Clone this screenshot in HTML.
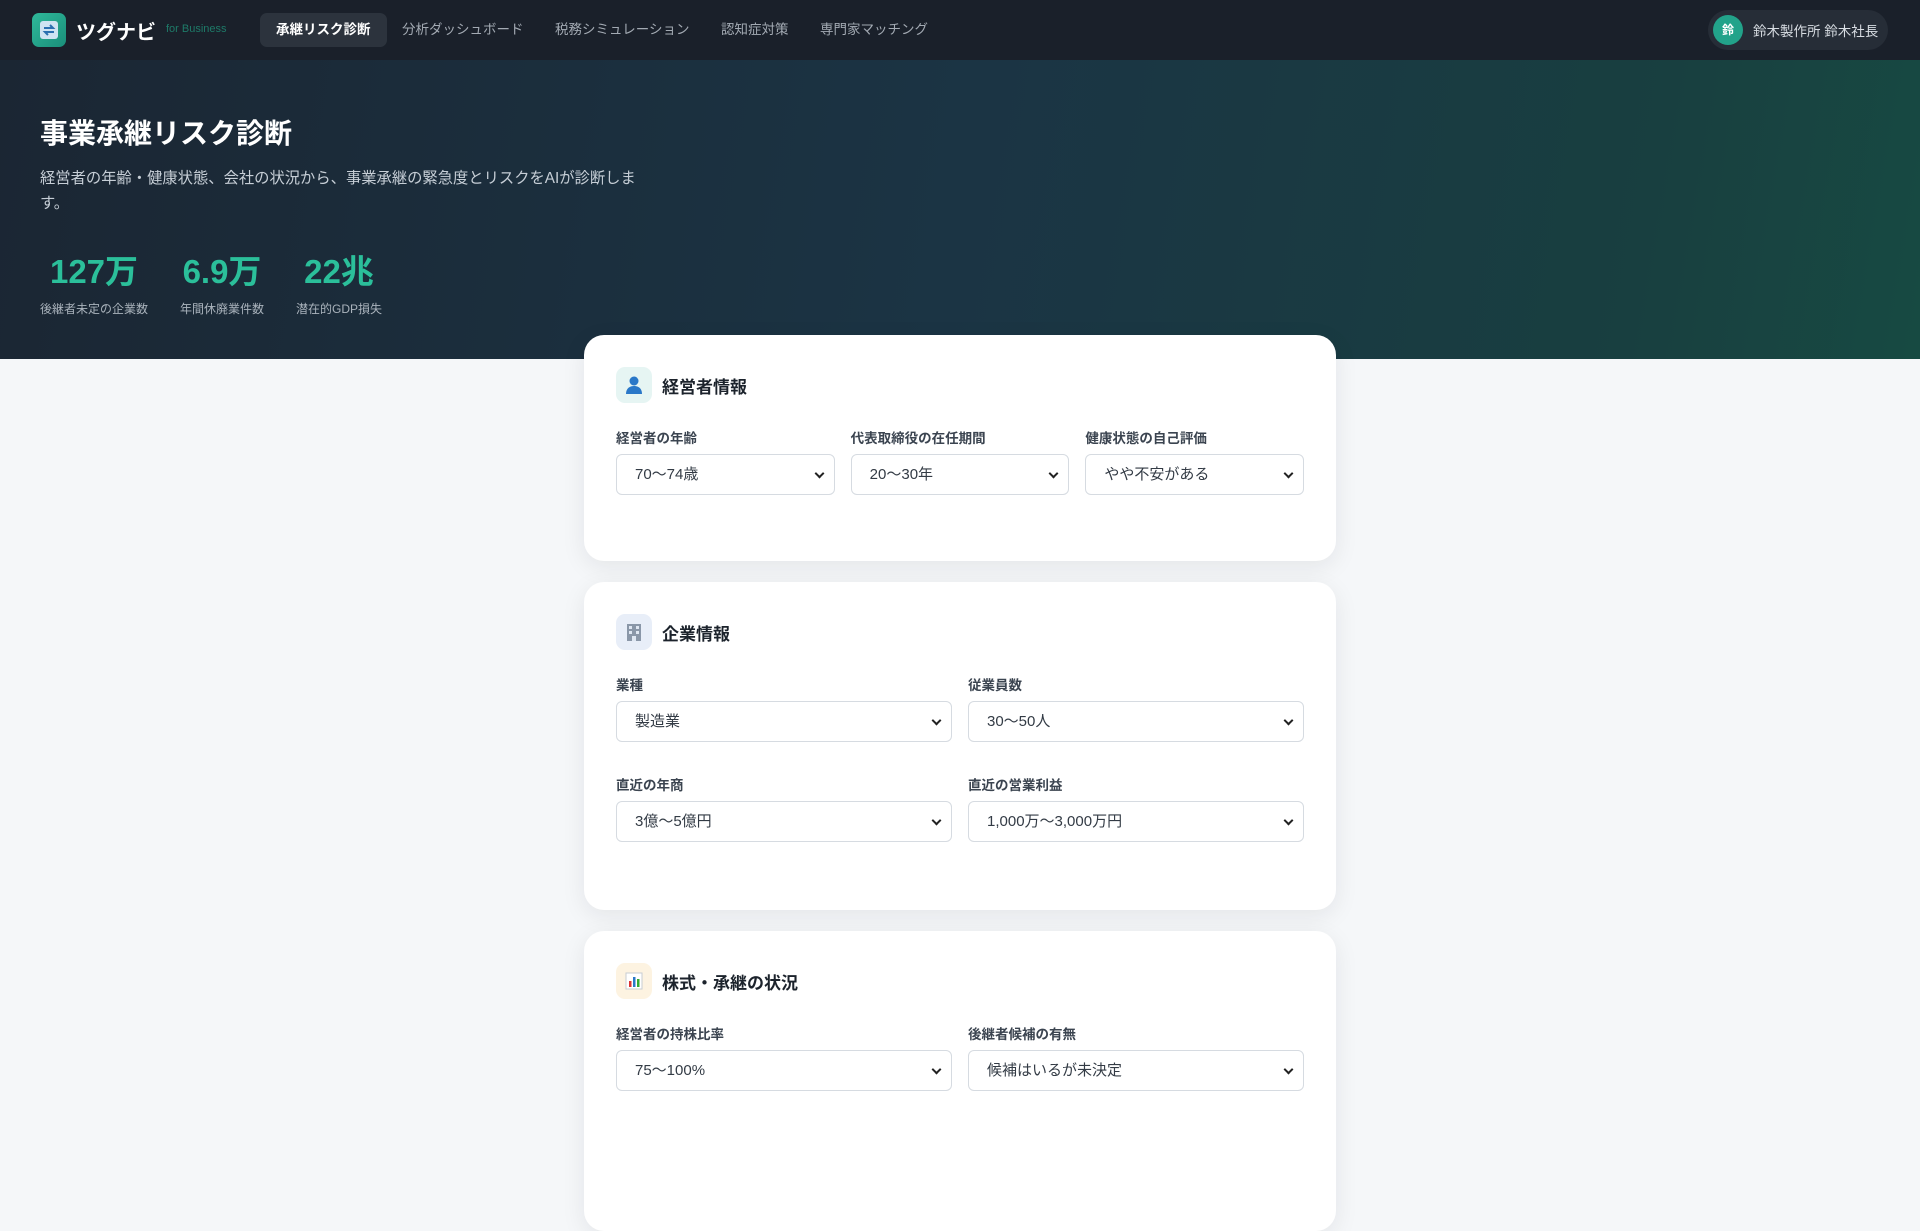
<!DOCTYPE html>
<html><head><meta charset="utf-8"><style>
*{box-sizing:border-box;margin:0;padding:0}
body{width:1920px;height:1080px;overflow:hidden;background:#f5f7f9;font-family:"Liberation Sans","Noto Sans CJK JP",sans-serif;position:relative}
.nav{position:absolute;left:0;top:0;width:1920px;height:60px;background:#1a202a}
.logo{position:absolute;left:32px;top:13px;width:34px;height:34px;border-radius:7px;background:linear-gradient(135deg,#2fb89a,#1a8f7a)}
.brand{position:absolute;left:76px;top:16px;color:#fff;font-size:20px;font-weight:bold}
.fb{position:absolute;left:166px;top:23px;color:#1e7a68;font-size:11px}
.ni{position:absolute;top:13px;height:34px;line-height:34px;font-size:13.5px;color:#a3aab3;white-space:nowrap}
.ni.act{background:#2c333d;color:#fff;font-weight:bold;border-radius:7px;padding:0 16px;left:260px}
.user{position:absolute;left:1708px;top:10px;width:180px;height:40px;border-radius:20px;background:#262d37}
.av{position:absolute;left:5px;top:5px;width:30px;height:30px;border-radius:50%;background:#22a38a;color:#fff;font-size:12px;font-weight:bold;text-align:center;line-height:30px}
.un{position:absolute;left:45px;top:10px;font-size:13.5px;color:#d8dde3;white-space:nowrap}
.hero{position:absolute;left:0;top:60px;width:1920px;height:299px;background:linear-gradient(100deg,#1b2633 0%,#1b3444 50%,#183f40 85%,#174a42 100%)}
.h1{position:absolute;left:40px;top:112px;color:#fff;font-size:28px;font-weight:bold}
.sub{position:absolute;left:40px;top:167px;white-space:nowrap;color:#c6ced6;font-size:15.3px;line-height:24.5px}
.st{position:absolute;top:251px;text-align:center;white-space:nowrap}
.st b{display:block;color:#2bbf9a;font-size:33px;line-height:42px}
.st span{display:block;color:#aab3bc;font-size:12px;margin-top:7px}
.card{position:absolute;left:584px;width:752px;background:#fff;border-radius:20px;box-shadow:0 6px 24px rgba(20,30,40,.08);padding:32px}
.hd{display:flex;align-items:center;height:36px;margin-bottom:24px}
.ic{width:36px;height:36px;border-radius:9px;display:flex;align-items:center;justify-content:center;margin-right:10px}
.hd h2{font-size:17px;color:#1c232c}
.row{display:flex;gap:16px;margin-bottom:32px}
.f{flex:1}
.f label{display:block;font-size:13.5px;font-weight:bold;color:#3b4450;height:18px;margin-bottom:9px}
.sel{position:relative;height:41px;border:1px solid #d6dbe1;border-radius:6px;font-size:15px;color:#333b45;line-height:39px;padding-left:18px}
.sel:after{content:"";position:absolute;right:11px;top:15px;width:5px;height:5px;border-right:2px solid #222;border-bottom:2px solid #222;transform:rotate(45deg)}
</style></head><body>
<div class="nav">
<div class="logo"><svg width="34" height="34" viewBox="0 0 34 34"><rect x="8" y="8" width="18" height="18" rx="3" fill="#cfe3f2"/><path d="M12 15h9l-3-3M22 19h-9l3 3" stroke="#2a6fb0" stroke-width="2" fill="none"/></svg></div>
<div class="brand">ツグナビ</div><div class="fb">for Business</div>
<div class="ni act">承継リスク診断</div>
<div class="ni" style="left:402px">分析ダッシュボード</div>
<div class="ni" style="left:555px">税務シミュレーション</div>
<div class="ni" style="left:721px">認知症対策</div>
<div class="ni" style="left:820px">専門家マッチング</div>
<div class="user"><div class="av">鈴</div><div class="un">鈴木製作所 鈴木社長</div></div>
</div>
<div class="hero">
</div>
<div class="h1">事業承継リスク診断</div>
<div class="sub">経営者の年齢・健康状態、会社の状況から、事業承継の緊急度とリスクをAIが診断しま<br>す。</div>
<div class="st" style="left:40px;width:108px"><b>127万</b><span>後継者未定の企業数</span></div>
<div class="st" style="left:180px;width:84px"><b>6.9万</b><span>年間休廃業件数</span></div>
<div class="st" style="left:296px;width:86px"><b>22兆</b><span>潜在的GDP損失</span></div>

<div class="card" style="top:335px;height:226px">
<div class="hd"><div class="ic" style="background:#e6f5f3"><svg width="20" height="20"><circle cx="10" cy="6" r="4.5" fill="#2a78c8"/><path d="M2 19c0-6 4-8 8-8s8 2 8 8z" fill="#2a78c8"/></svg></div><h2>経営者情報</h2></div>
<div class="row"><div class="f"><label>経営者の年齢</label><div class="sel">70〜74歳</div></div><div class="f"><label>代表取締役の在任期間</label><div class="sel">20〜30年</div></div><div class="f"><label>健康状態の自己評価</label><div class="sel">やや不安がある</div></div></div>
</div>

<div class="card" style="top:582px;height:328px">
<div class="hd"><div class="ic" style="background:#e8eef8"><svg width="20" height="20"><rect x="3" y="2" width="14" height="17" fill="#8a97a8"/><g fill="#dfe7f2"><rect x="5" y="4" width="3" height="3"/><rect x="12" y="4" width="3" height="3"/><rect x="5" y="9" width="3" height="3"/><rect x="12" y="9" width="3" height="3"/><rect x="8" y="14" width="4" height="5"/></g></svg></div><h2>企業情報</h2></div>
<div class="row"><div class="f"><label>業種</label><div class="sel">製造業</div></div><div class="f"><label>従業員数</label><div class="sel">30〜50人</div></div></div>
<div class="row"><div class="f"><label>直近の年商</label><div class="sel">3億〜5億円</div></div><div class="f"><label>直近の営業利益</label><div class="sel">1,000万〜3,000万円</div></div></div>
</div>

<div class="card" style="top:931px;height:300px">
<div class="hd"><div class="ic" style="background:#fdf3e1"><svg width="20" height="20"><rect x="2" y="2" width="16" height="16" fill="#fff" stroke="#c8ccd2"/><rect x="5" y="10" width="2.5" height="6" fill="#d33"/><rect x="9" y="6" width="2.5" height="10" fill="#2a78c8"/><rect x="13" y="8" width="2.5" height="8" fill="#3a3"/></svg></div><h2>株式・承継の状況</h2></div>
<div class="row"><div class="f"><label>経営者の持株比率</label><div class="sel">75〜100%</div></div><div class="f"><label>後継者候補の有無</label><div class="sel">候補はいるが未決定</div></div></div>
</div>
</body></html>
